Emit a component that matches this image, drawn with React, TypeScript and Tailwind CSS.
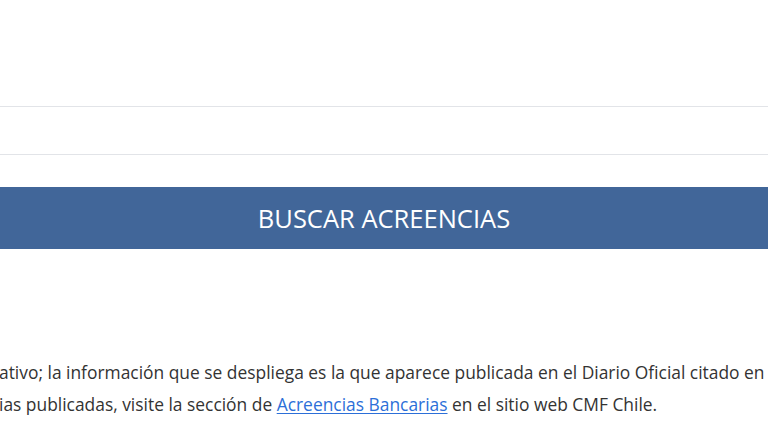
export default function App() {
  return (
    <div
      className="w-[768px] h-[432px] overflow-hidden bg-white text-[#333333]"
      style={{ fontFamily: '"Open Sans", "Noto Sans", Arial, sans-serif' }}
    >
      {/* form fields (borders only visible) */}
      <div className="h-[106px]" />
      <div className="h-[49px] border-y border-[#e2e4e8]" />
      <div className="mt-[32px]">
        <button className="w-full h-[62px] bg-[#416699] text-white text-[25.5px] flex items-center justify-center">
          BUSCAR ACREENCIAS
        </button>
      </div>
      {/* disclaimer */}
      <div className="mt-[107px] text-[17.4px] leading-[32px] whitespace-nowrap">
        <p className="-ml-px">
          ativo; la información que se despliega es la que aparece publicada en el Diario Oficial citado en
        </p>
        <p className="-ml-px">
          ias publicadas, visite la sección de{' '}
          <a href="#" className="text-[#2c6fd8] underline underline-offset-2">
            Acreencias Bancarias
          </a>{' '}
          en el sitio web CMF Chile.
        </p>
      </div>
    </div>
  );
}
